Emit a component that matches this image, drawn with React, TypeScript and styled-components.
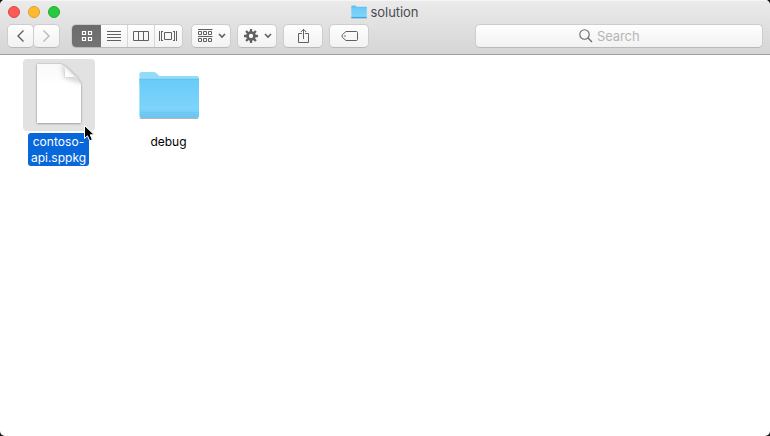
import React from "react";
import styled, { createGlobalStyle, css } from "styled-components";

const GlobalStyle = createGlobalStyle`
  * { box-sizing: border-box; }
  html, body { margin: 0; background: #161616; }
  body { font-family: Inter, "Noto Sans", sans-serif; cursor: default; }
  svg { display: block; flex: none; }
`;

const Window = styled.main`
  width: 770px;
  height: 436px;
  display: flex;
  flex-direction: column;
  overflow: hidden;
  border-radius: 5px;
  background: #fff;
`;

const Header = styled.header`
  height: 55px;
  flex: none;
  background: linear-gradient(#ebebeb, #d5d5d5);
  border-bottom: 1px solid #a0a0a0;
  box-shadow: inset 0 1px #f5f5f5;
`;

const TitleBar = styled.div`
  height: 24px;
  display: grid;
  grid-template-columns: 1fr auto 1fr;
  align-items: center;
  padding: 0 8.5px 0 7.5px;
`;

const Lights = styled.div`
  display: flex;
  gap: 8px;
  padding-bottom: 1px;
`;

const Light = styled.span<{ $fill: string; $edge: string }>`
  width: 12px;
  height: 12px;
  border-radius: 50%;
  background: ${(p) => p.$fill};
  border: 1px solid ${(p) => p.$edge};
`;

const Title = styled.h1`
  display: flex;
  align-items: center;
  gap: 4px;
  margin: 0;
  padding-bottom: 1px;
  font-size: 13px;
  font-weight: 400;
  line-height: 16px;
  letter-spacing: -0.05px;
  color: #4b4b4b;
`;

const Toolbar = styled.div`
  height: 24px;
  display: flex;
  padding: 0 7px;
`;

const surface = css`
  background: linear-gradient(#fefefe, #f2f2f2);
  border: 1px solid #cdcdcd;
  border-bottom-color: #b9b9b9;
  border-radius: 5px;
`;

const NavButton = styled.button`
  ${surface}
  width: 27px;
  height: 24px;
  margin: 0;
  padding: 0;
  display: flex;
  align-items: center;
  justify-content: center;

  & + & { margin-left: -1px; }
`;

const ToolButtons = styled.div`
  display: flex;
  gap: 6px;
  margin-left: 8px;
`;

const ToolButton = styled.button`
  ${surface}
  width: 40px;
  height: 24px;
  margin: 0;
  padding: 0 0 0 2px;
  display: flex;
  align-items: center;
  justify-content: center;
  gap: 5px;
  color: #606060;
`;

const Segments = styled.div`
  ${surface}
  width: 112px;
  height: 24px;
  margin-left: 11px;
  display: grid;
  grid-template-columns: 29px 26px 27px 28px;
  overflow: hidden;
`;

const Segment = styled.button<{ $active?: boolean }>`
  padding: 0;
  margin: ${(p) => (p.$active ? "-1px 0 -1px -1px" : "0")};
  border: 0;
  background: ${(p) => (p.$active ? "linear-gradient(#6b6b6b, #747474)" : "none")};
  color: ${(p) => (p.$active ? "#fff" : "#606060")};
  display: flex;
  align-items: center;
  justify-content: center;

  &:first-child { padding-left: 2px; }
  &:nth-child(n + 3) { border-left: 1px solid #d6d6d6; }
  &:last-child { padding-right: 1px; }
`;

const Search = styled.label`
  ${surface}
  width: 288px;
  height: 24px;
  margin-left: auto;
  display: flex;
  align-items: center;
  gap: 4px;
  padding-left: 103px;
  font-size: 13px;
  line-height: 16px;
  letter-spacing: -0.1px;
  color: #b5b5b5;
`;

const Files = styled.section`
  flex: 1;
  display: flex;
  align-items: flex-start;
  gap: 2px;
  padding: 4px 0 0 5px;
`;

const File = styled.article`
  width: 108px;
  display: flex;
  flex-direction: column;
  align-items: center;
  gap: 2px;
`;

const Thumb = styled.div<{ $selected?: boolean }>`
  position: relative;
  width: 72px;
  height: 72px;
  border-radius: 4px;
  background: ${(p) => (p.$selected ? "#e2e2e2" : "transparent")};
`;

const Pointer = styled.span`
  position: absolute;
  left: 60px;
  top: 65px;
  z-index: 1;
`;

const FileName = styled.div<{ $selected?: boolean }>`
  width: 61px;
  margin-right: 1px;
  min-height: 33px;
  padding: 1px 0 0;
  border-radius: 3px;
  background: ${(p) => (p.$selected ? "#0867da" : "transparent")};
  color: ${(p) => (p.$selected ? "#fff" : "#000")};
  font-size: 12px;
  line-height: 16px;
  text-align: center;
`;

const NameLine = styled.span<{ $spacing: number }>`
  display: block;
  letter-spacing: ${(p) => p.$spacing}px;
  white-space: nowrap;
`;

function Folder({ small = false }: { small?: boolean }) {
  const id = small ? "small-folder" : "large-folder";
  return (
    <svg width={small ? 16 : 72} height={small ? 14 : 72} viewBox={small ? "5 11 62 51" : "0 0 72 72"} preserveAspectRatio="none">
      <defs>
        <linearGradient id={id} x2="0" y2="1">
          <stop stopColor="#69cbf8" />
          <stop offset=".75" stopColor="#7dd3fb" />
          <stop offset="1" stopColor="#6cc8f2" />
        </linearGradient>
      </defs>
      <path d="M7 59.4h58" stroke="#a5acaf" strokeWidth="1" />
      <path d="M6.4 20v-5q0-2 2-2h12q2 0 3 1l3 3H64q2 0 2 2v6H6.4z" fill={small ? "#62c1ef" : "#92dcfa"} />
      <path d="M6.4 20H66v37q0 2-2 2H8.4q-2 0-2-2z" fill={`url(#${id})`} />
      <path d="M6.4 20.3H66" stroke="#62bee8" strokeWidth=".8" />
      {small && <path d="M6 57h60" stroke="#3fa4d6" strokeWidth="4" />}
      {!small && <path d="M7 53.5h59m-59 2h59m-59 2h59" stroke="#5eb9e2" strokeWidth=".35" />}
    </svg>
  );
}

function Document() {
  return (
    <svg width="72" height="72" viewBox="0 0 72 72">
      <defs>
        <filter id="page-shadow" x="-20%" y="-20%" width="140%" height="140%">
          <feDropShadow dx="0" dy=".5" stdDeviation=".8" floodOpacity=".42" />
        </filter>
        <linearGradient id="page" x2="0" y2="1">
          <stop stopColor="#f9f9f9" /><stop offset=".35" stopColor="#fff" />
        </linearGradient>
        <linearGradient id="fold" gradientUnits="userSpaceOnUse" x1="42" y1="18" x2="48" y2="12">
          <stop stopColor="#fff" /><stop offset=".6" stopColor="#fbfbfb" /><stop offset="1" stopColor="#e0e0e0" />
        </linearGradient>
        <filter id="fold-shadow" x="-50%" y="-50%" width="200%" height="200%"><feGaussianBlur stdDeviation="2.2" /></filter>
        <clipPath id="page-shape"><path d="M14 5h24q4 1 7 4l9 9q4 4 4 9v37H14z" /></clipPath>
      </defs>
      <path d="M14 5h24q4 1 7 4l9 9q4 4 4 9v37H14z" fill="url(#page)" filter="url(#page-shadow)" />
      <g clipPath="url(#page-shape)">
        <path d="M38 6l3 13 17 6V18L44 6z" fill="#d8d8d8" filter="url(#fold-shadow)" />
      </g>
      <path d="M38.500 5.300q3.500 2 3.500 6V18h8q4 0 7 5-1-2.500-3-5l-9-9q-3-3-6.500-3.700z" fill="url(#fold)" />
      <path d="M42 18.500h8.500M41.500 11v7.500" fill="none" stroke="#d0d0d0" strokeWidth=".5" />
      <path d="M39 5.300q3 1 6 4l9 9q2.500 2.500 3.500 6" fill="none" stroke="#bdbdbd" strokeWidth=".7" />
    </svg>
  );
}

const line = { fill: "none", stroke: "currentColor", strokeWidth: 1 };

function Chevron({ direction }: { direction: "left" | "right" | "down" }) {
  if (direction === "down") {
    return <svg width="8" height="6" viewBox="0 0 8 6"><path d="M1 1l3 3 3-3" {...line} strokeWidth="1.6" /></svg>;
  }
  return (
    <svg width="10" height="14" viewBox="0 0 10 14">
      <path d={direction === "left" ? "M7.5 1.5L2 7l5.5 5.5" : "M1.5 1.5L7 7l-5.5 5.5"} {...line} stroke={direction === "left" ? "#606060" : "#b8b8b8"} strokeWidth="1.4" />
    </svg>
  );
}

function Gear() {
  return (
    <svg width="15" height="14" viewBox="-7 -7 15 14">
      {[0, 45, 90, 135].map((angle) => (
        <path key={angle} d="M0-7v3M0 4v3" stroke="currentColor" strokeWidth="2.3" transform={`rotate(${angle})`} />
      ))}
      <circle r="3.5" fill="none" stroke="currentColor" strokeWidth="2.7" />
    </svg>
  );
}

export default function App() {
  return (
    <>
      <GlobalStyle />
      <Window>
        <Header>
          <TitleBar>
            <Lights>
              <Light $fill="#fc5b57" $edge="#df4643" />
              <Light $fill="#fdbc2f" $edge="#dda026" />
              <Light $fill="#28c940" $edge="#1ead30" />
            </Lights>
            <Title><Folder small />solution</Title>
          </TitleBar>
          <Toolbar>
            <NavButton aria-label="Back"><Chevron direction="left" /></NavButton>
            <NavButton aria-label="Forward"><Chevron direction="right" /></NavButton>
            <Segments>
              <Segment $active aria-label="Icons">
                <svg width="12" height="12" viewBox="0 0 12 12"><path d="M1.5 1.5h3v3h-3zm6 0h3v3h-3zm-6 6h3v3h-3zm6 0h3v3h-3z" {...line} strokeWidth="1.2" /></svg>
              </Segment>
              <Segment aria-label="List">
                <svg width="14" height="12" viewBox="0 0 14 12"><path d="M0 1.5h14M0 4.5h14M0 7.5h14M0 10.5h14" {...line} /></svg>
              </Segment>
              <Segment aria-label="Columns">
                <svg width="16" height="12" viewBox="0 0 16 12"><path d="M.5 1.5h15v9H.5zM5.5 1.5v9m5-9v9" {...line} /></svg>
              </Segment>
              <Segment aria-label="Gallery">
                <svg width="18" height="12" viewBox="0 0 18 12"><path d="M.5 1v10M2.5 1v10M17.5 1v10M15.5 1v10M5.5 2.5h7v7h-7zM3 1.5h1m-1 9h1m10-9h1m-1 9h1" {...line} /></svg>
              </Segment>
            </Segments>
            <ToolButtons>
              <ToolButton aria-label="Group">
                <svg width="15" height="14" viewBox="0 0 15 14"><path d="M0 .5h14.5M0 7.5h14.5M.5 2.5h3v3h-3zm5 0h3v3h-3zm5 0h3v3h-3zM.5 9.5h3v3h-3zm5 0h3v3h-3zm5 0h3v3h-3z" {...line} /></svg>
                <Chevron direction="down" />
              </ToolButton>
              <ToolButton aria-label="Actions"><Gear /><Chevron direction="down" /></ToolButton>
              <ToolButton aria-label="Share">
                <svg width="12" height="16" viewBox="0 0 12 16"><path d="M4 5.5H.5v9h10v-9H7M5.5 11V1.3M2.8 4l2.7-2.7L8.2 4" {...line} /></svg>
              </ToolButton>
              <ToolButton aria-label="Tags">
                <svg width="18" height="12" viewBox="0 0 18 12"><path d="M5 1.5h10.5q1 0 1 1v7q0 1-1 1H5L1.4 7.3Q.5 6 1.4 4.7z" {...line} /><circle cx="4" cy="6" r=".8" fill="currentColor" /></svg>
              </ToolButton>
            </ToolButtons>
            <Search>
              <svg width="14" height="14" viewBox="0 0 14 14"><circle cx="5.5" cy="5.5" r="4.7" {...line} stroke="#666" strokeWidth="1.1" /><path d="M9 9l4 4" stroke="#666" strokeWidth="1.2" /></svg>
              <span>Search</span>
            </Search>
          </Toolbar>
        </Header>
        <Files>
          <File>
            <Thumb $selected>
              <Document />
              <Pointer><svg width="13" height="19" viewBox="0 0 13 19"><path d="M1.5 1.5v13l3-2.7 2.2 5 2.7-1.2-2.2-4.8h4.1z" fill="#000" stroke="#fff" strokeWidth="1" /></svg></Pointer>
            </Thumb>
            <FileName $selected><NameLine $spacing={0.05}>contoso-</NameLine><NameLine $spacing={0}>api.sppkg</NameLine></FileName>
          </File>
          <File>
            <Thumb><Folder /></Thumb>
            <FileName><NameLine $spacing={-0.05}>debug</NameLine></FileName>
          </File>
        </Files>
      </Window>
    </>
  );
}
